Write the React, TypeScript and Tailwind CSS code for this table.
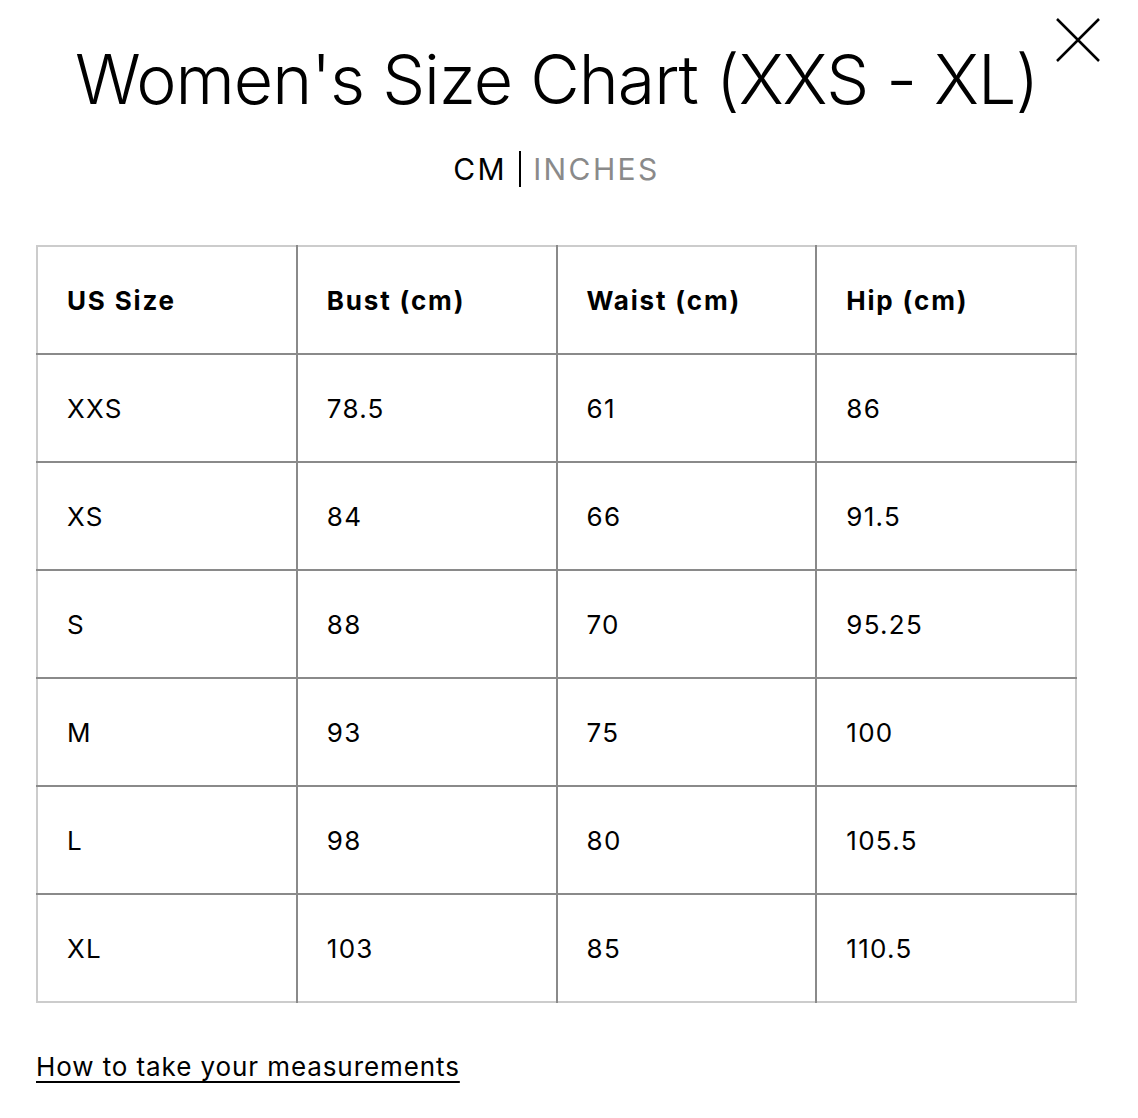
import React from 'react';

const rows = [
  ['XXS', '78.5', '61', '86'],
  ['XS', '84', '66', '91.5'],
  ['S', '88', '70', '95.25'],
  ['M', '93', '75', '100'],
  ['L', '98', '80', '105.5'],
  ['XL', '103', '85', '110.5'],
];

const headers = ['US Size', 'Bust (cm)', 'Waist (cm)', 'Hip (cm)'];

export default function App() {
  return (
    <div className="min-h-screen bg-white relative font-['Inter',sans-serif] text-black">
      <button className="absolute left-[1054px] top-[16px] w-[48px] h-[48px]" aria-label="Close">
        <svg width="48" height="48" viewBox="0 0 48 48" fill="none" stroke="#000" strokeWidth="2.5">
          <path d="M3 3 L45 45 M45 3 L3 45" />
        </svg>
      </button>

      <div className="w-[1041px] ml-[36px] pt-[36px]">
        <h1 className="text-center whitespace-nowrap text-[68px] leading-[86px] font-light tracking-[-0.015em]">
          Women's Size Chart (XXS - XL)
        </h1>

        <div className="flex justify-center items-center mt-[29px] text-[30px] leading-[36px] tracking-[0.08em]">
          <span className="text-black">CM</span>
          <span className="w-[2px] h-[36px] bg-black mx-[12px]" />
          <span className="text-[#8a8a8a]">INCHES</span>
        </div>

        <table className="mt-[58px] w-full border-collapse table-fixed border-2 border-[#cccccc] text-[26px] tracking-[0.05em]">
          <thead>
            <tr className="h-[108px]">
              {headers.map((h, i) => (
                <th
                  key={h}
                  className={`text-left font-bold tracking-[0.07em] pl-[29px] ${i < 3 ? 'border-r-2 border-r-[#8a8a8a]' : ''} border-b-2 border-b-[#8a8a8a]`}
                >
                  {h}
                </th>
              ))}
            </tr>
          </thead>
          <tbody>
            {rows.map((r, ri) => (
              <tr key={r[0]} className="h-[108px]">
                {r.map((c, i) => (
                  <td
                    key={i}
                    className={`pl-[29px] ${i < 3 ? 'border-r-2 border-r-[#8a8a8a]' : ''} ${ri < rows.length - 1 ? 'border-b-2 border-b-[#8a8a8a]' : ''}`}
                  >
                    {c}
                  </td>
                ))}
              </tr>
            ))}
          </tbody>
        </table>

        <div className="mt-[48px] leading-[32px]">
          <a href="#" className="text-[26px] tracking-[0.035em] underline underline-offset-[5px] decoration-2">
            How to take your measurements
          </a>
        </div>
      </div>
    </div>
  );
}
